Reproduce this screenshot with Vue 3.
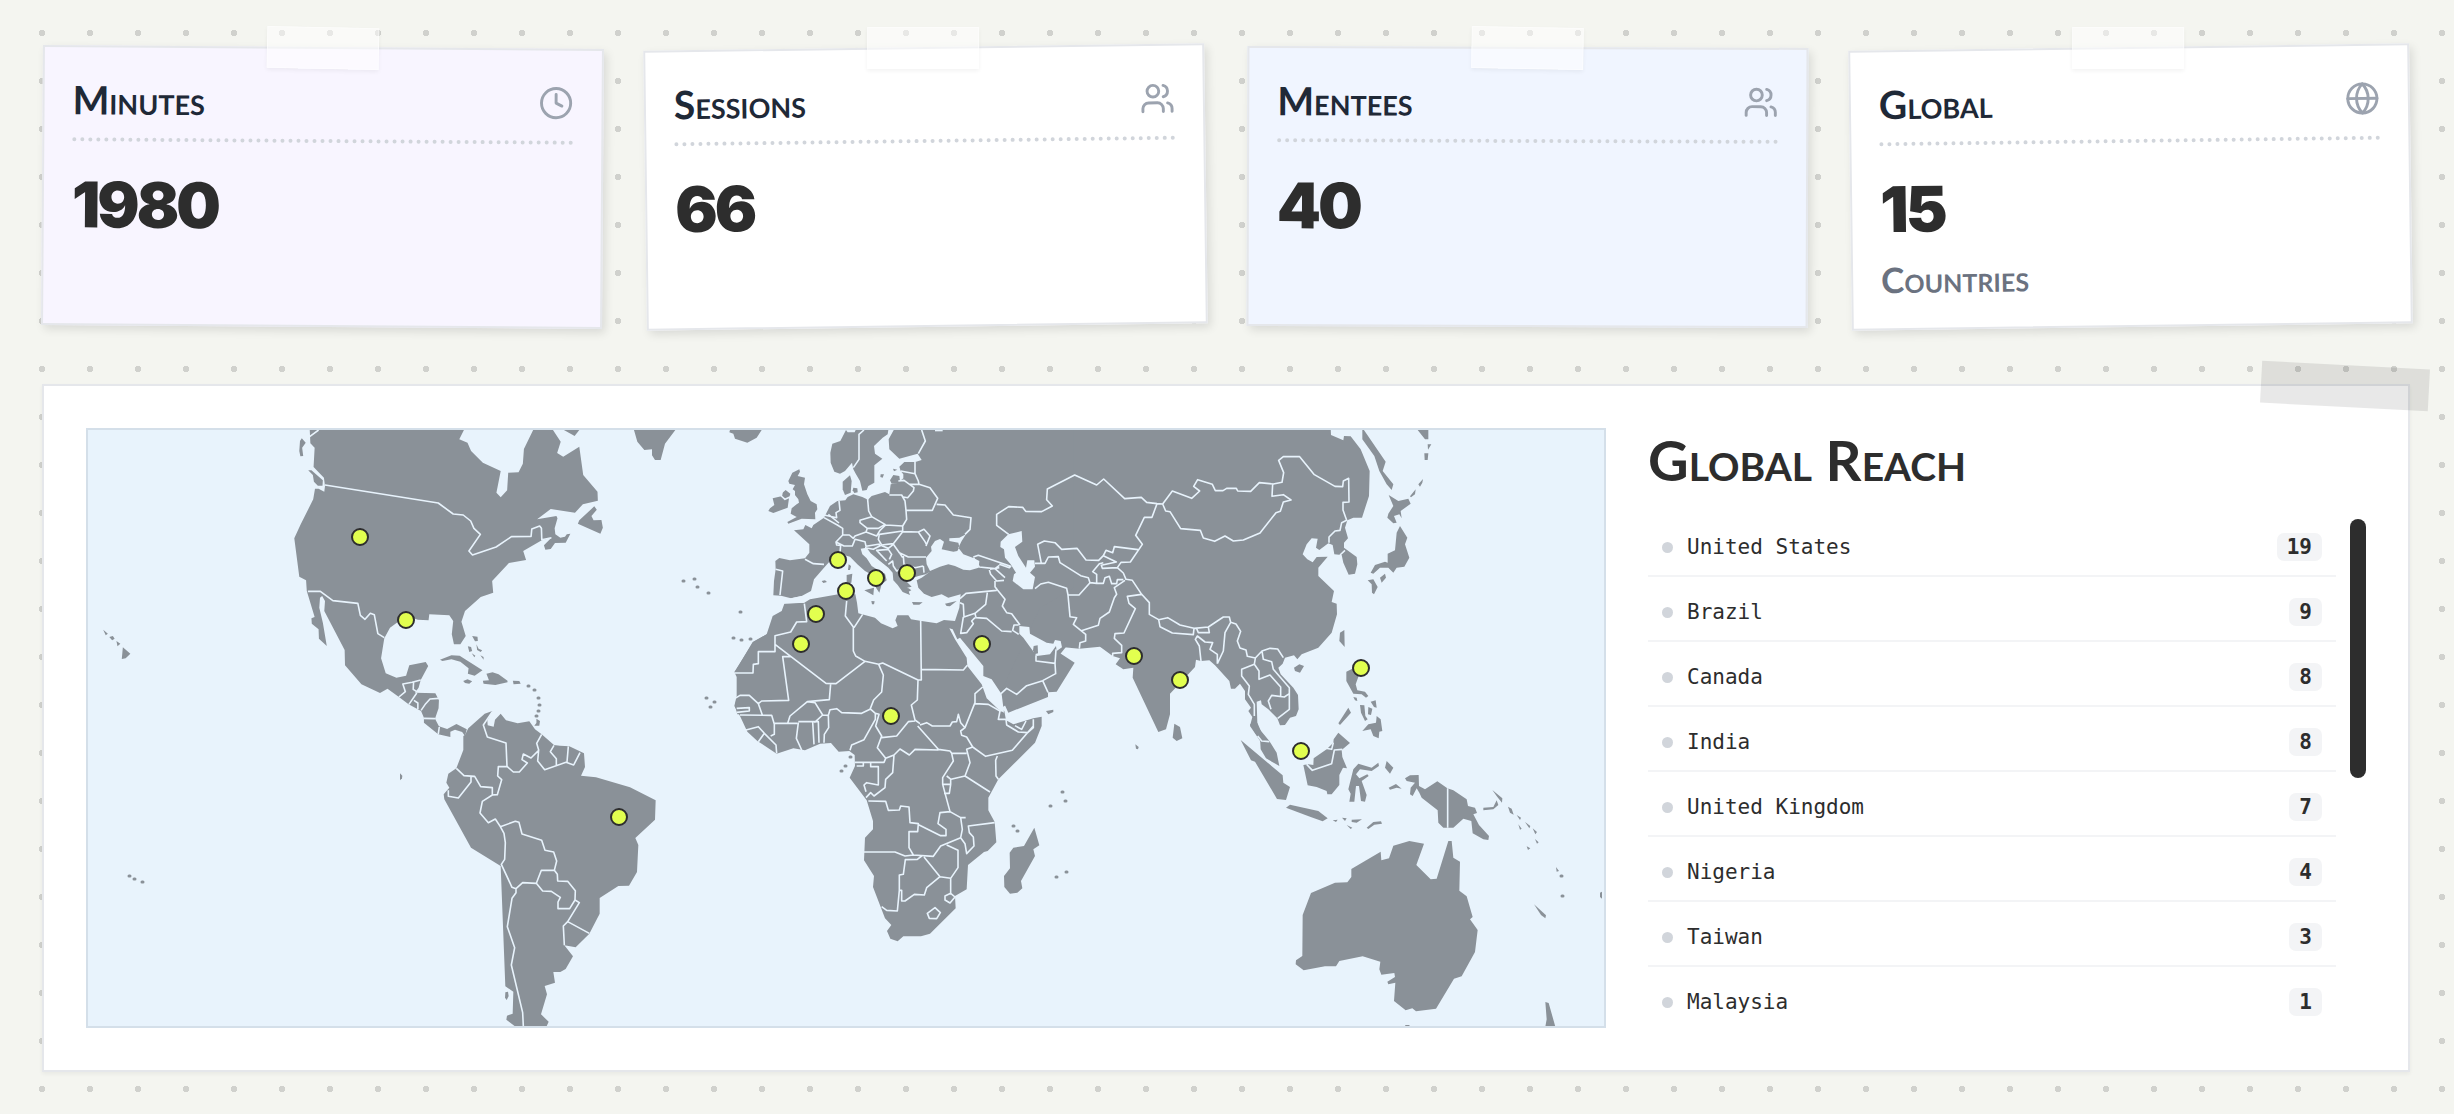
<script setup>
const cards = [
  { title: 'Minutes', value: '1980', icon: 'clock', tone: 'lilac', tilt: 'tilt-right' },
  { title: 'Sessions', value: '66', icon: 'users', tone: 'plain', tilt: 'tilt-left' },
  { title: 'Mentees', value: '40', icon: 'users', tone: 'sky', tilt: 'tilt-slight' },
  { title: 'Global', value: '15', icon: 'globe', tone: 'plain', tilt: 'tilt-left', note: 'Countries' },
]

const countries = [
  { name: 'United States', count: 19 },
  { name: 'Brazil', count: 9 },
  { name: 'Canada', count: 8 },
  { name: 'India', count: 8 },
  { name: 'United Kingdom', count: 7 },
  { name: 'Nigeria', count: 4 },
  { name: 'Taiwan', count: 3 },
  { name: 'Malaysia', count: 1 },
]

const pins = [
  [360, 536], [406, 619], [619, 816], [838, 559], [876, 577],
  [907, 572], [846, 590], [816, 613], [801, 643], [982, 643],
  [891, 715], [1134, 655], [1180, 679], [1361, 667], [1301, 750],
]

// Each region of the map is drawn on its own grid and placed with a transform.
const regions = [
  {
    id: 'north-america',
    place: 'translate(80 420) scale(0.357143 0.333333)',
    land: [
      'M643,20 1075,20 1075,27 1062,55 1085,65 1095,90 1128,125 1178,150 1166,215 1178,229 1196,208 1199,155 1228,154 1240,128 1243,84 1272,20 1320,20 1346,62 1336,96 1353,107 1398,77 1409,162 1449,212 1450,239 1408,250 1386,275 1318,264 1280,295 1334,285 1337,292 1329,322 1331,340 1345,350 1358,347 1363,340 1373,338 1360,365 1330,366 1318,384 1303,386 1299,373 1320,350 1293,358 1241,390 1249,417 1201,426 1154,480 1157,515 1122,528 1078,570 1068,602 1080,645 1065,670 1047,670 1041,640 1045,600 1034,583 978,580 976,598 946,596 930,590 890,603 868,620 852,652 843,712 856,757 886,770 913,764 922,733 968,723 975,735 954,777 948,800 938,815 995,817 1005,838 1004,862 994,893 1005,916 1028,924 1054,909 1083,925 1078,945 1070,933 1050,926 1037,932 1037,948 1003,940 963,905 963,890 955,870 920,850 893,828 861,803 840,816 788,790 742,733 741,687 684,570 686,540 678,525 672,530 670,560 680,605 691,675 669,653 668,625 649,608 648,592 657,588 635,510 633,478 614,467 600,352 618,310 653,235 658,203 668,203 684,212 686,195 683,170 654,138 657,80 645,67Z',
      'M639,148 648,148 680,178 679,194 666,194 655,182 652,162Z',
      'M621,52 632,65 622,80 625,105 617,106 614,90 616,60Z',
      'M1355,27 1398,27 1385,45Z',
      'M1440,256 1447,266 1432,285 1438,298 1460,297 1464,320 1457,338 1394,308 1398,298Z',
      'M1008,716 1040,703 1063,704 1127,748 1105,764 1086,758 1088,742 1065,722 1040,715 1015,720Z',
      'M1138,758 1155,754 1172,760 1197,779 1197,784 1163,792 1130,788 1128,779 1145,778Z',
      'M1073,780 1085,775 1098,781 1090,788 1078,786Z',
      'M1212,779 1230,780 1234,788 1214,790Z',
      'M120,679 141,698 128,712 117,714Z M65,626 78,638 72,643Z M82,648 92,645 97,653 90,658Z M102,660 113,668 105,676Z',
      'M1098,645 1113,647 1114,660 1106,661Z M1086,676 1095,678 1098,690 1090,693Z M1110,670 1116,683 1126,688 1122,693 1112,687Z M1097,697 1107,704 1104,709Z M1121,703 1130,708 1130,716Z',
      'M1278,893 1288,900 1286,914 1272,914 1278,906Z',
    ],
    borders: 'M668,27 643,47M686,192 1003,246 1045,279 1073,282 1094,300 1103,322 1121,340 1089,390 1099,402 1165,378 1208,347 1263,346 1265,324 1287,315 1292,322 1293,356 1320,350M638,511 673,511 708,539 778,547 785,583 798,595 813,577 824,581 834,638 852,650M893,828 911,812 904,789 930,784 954,777M934,784 933,805 943,812M943,816 921,850M935,838 946,846 946,864M955,868 968,848 980,834 1005,832M963,892 994,893M1003,940 1006,918',
  },
  {
    id: 'south-america',
    place: 'translate(400 680) scale(0.333333)',
    land: [
      'M190,165 190,207 169,262 145,278 139,305 148,320 131,340 133,355 213,500 302,555 316,916 340,932 338,998 321,1004 319,1016 345,1036 438,1040 446,1022 423,1000 441,940 434,915 465,905 460,873 481,873 497,864 519,826 493,793 527,799 568,758 599,698 599,651 655,615 687,614 711,573 715,492 706,471 765,416 767,358 690,319 588,289 543,284 555,258 552,217 508,196 480,194 462,192 425,160 405,145 388,121 353,127 318,118 302,98 285,116 281,137 263,133 262,118 277,90 254,98 205,142 195,162Z',
      'M316,934 324,932 326,945 320,957 315,950Z',
      'M0,277 7,284 6,292 0,298Z',
    ],
    borders: 'M277,92 250,132 262,168 318,186 321,256M169,262 192,284 224,286 242,317 277,320 277,342M213,288 213,303 175,351 145,346 145,328M425,160 410,187 416,207 413,240 434,266 498,244 521,252 540,215M462,193 451,212 469,233 469,252M505,196 501,243M416,208 393,231 370,219 366,236 382,246 358,273 340,273 321,256 295,257 293,285 305,296 292,341 277,342 247,361 240,396 265,425 286,414 301,437 346,421 357,424 366,459 425,478 435,508 461,513 470,540 463,568 424,568 409,607 428,630 454,631 481,649 474,663 474,683 509,683 525,657 526,629 503,601 473,600 472,580 463,568M301,437 312,457 316,485 314,535 304,550 336,619 348,623 368,605 409,607M348,623 348,635 336,652 322,737 344,800 334,852 368,995 370,1036M525,657 538,665 503,722 490,735 493,793M503,722 568,757',
  },
  {
    id: 'europe',
    place: 'translate(620 420) scale(0.333333)',
    land: [
      'M42,27 166,27 135,68 122,117 105,117 96,103 96,85 73,87 52,62Z',
      'M330,27 425,27 410,50 382,65 345,53 340,38 328,34Z',
      'M538,145 540,152 533,165 555,170 552,190 562,220 572,240 590,250 592,265 585,275 586,295 545,293 505,308 502,303 530,288 512,278 515,262 530,250 537,245 535,235 525,222 525,210 518,205 525,192 508,188 505,180 517,155Z',
      'M484,218 497,207 511,218 507,232 503,260 460,276 445,270 450,262 463,252 458,232 484,226Z',
      'M678,27 683,34 704,34 707,27 805,27 803,40 788,50 762,75 765,98 787,113 763,133 763,185 745,195 740,207 727,209 720,180 708,160 700,145 696,125 675,150 660,158 643,152 632,125 631,95 637,68 661,60Z',
      'M690,163 695,180 692,215 675,222 668,205 668,182Z',
      'M700,200 712,202 713,214 703,216 698,208Z',
      'M782,160 792,160 788,170 781,168Z M819,143 832,146 822,151Z',
      'M825,20 806,55 808,85 838,113 893,98 905,117 886,123 853,123 838,137 842,150 850,160 850,172 840,180 838,165 820,162 810,178 815,188 833,186 812,190 808,220 795,213 755,225 744,236 727,228 700,220 683,228 676,238 652,240 630,255 612,290 580,312 575,322 556,312 550,325 522,328 568,370 568,395 555,412 510,418 478,411 466,420 467,445 462,480 460,523 483,524 513,532 545,525 553,545 493,548 485,570 458,585 440,640 398,663 345,752 352,765 352,820 345,855 352,880 1130,880 1145,860 1240,800 1400,600 1400,20Z',
    ],
    water: [
      'M475,536 513,532 545,525 573,510 582,475 612,440 630,420 650,396 690,407 712,430 735,450 762,465 768,500 778,515 785,490 800,478 795,458 775,448 755,435 740,412 727,400 722,383 740,380 752,397 780,420 805,440 818,455 820,478 833,492 848,513 870,522 862,500 875,497 858,480 880,470 895,465 917,460 930,452 905,470 890,478 895,500 912,518 935,528 965,520 985,530 1022,520 1018,560 1005,600 972,597 950,607 905,600 873,595 865,583 832,583 826,598 833,615 818,622 783,607 765,590 715,577 711,545 706,520 655,520 570,535 553,545 500,547 475,548Z',
      'M918,410 935,390 933,377 945,360 960,354 972,362 965,385 1000,392 1012,390 1018,378 1015,365 988,360 988,352 1018,350 1038,340 1025,360 1015,380 1030,400 1062,412 1078,420 1076,440 1050,448 1030,446 1005,435 985,430 960,437 930,450 920,430Z',
      'M945,20 968,20 968,31 945,31Z',
    ],
    isles: [
      'M733,508 762,500 760,523Z M680,462 697,458 694,485 680,488Z M686,430 693,435 690,447 684,447Z',
      'M876,543 908,544 898,551 880,551Z M975,548 1010,540 990,556 980,555Z M605,480 615,478 621,483 610,486Z M754,540 764,541 762,550 756,550Z',
      'M848,500 866,502 874,508 860,515Z',
    ],
    borders: 'M467,445 488,450 480,522M555,415 580,428 612,430M612,290 652,312 668,322 668,342 648,363 650,372 662,373 660,395M612,282 650,290 648,275 660,268 657,240M625,280 657,306M742,225 746,270 755,287 720,298 720,305 742,322 738,333 705,345 700,352 688,342 668,342M648,363 672,375 697,375 705,355 735,362 738,376 775,370 780,370M755,287 795,310 775,322 742,322M738,333 770,345 780,328 797,312 848,315M808,222 845,222 855,240 858,268 860,295 848,315 848,332 820,368 785,372 775,355 778,340 848,330M858,268 937,268 953,232 930,200 897,190 895,180 885,158 885,123M842,150 885,158M835,180 852,178 882,200 880,210 863,230 850,228M897,190 870,190M950,250 975,252 1000,282 1053,290 1050,325 1035,340M848,332 895,333 912,325 930,345 918,375M895,333 915,362 920,372M820,370 838,395 865,408 918,408M850,405 852,430 885,440 910,435M838,395 848,410M852,440 830,450 820,435 818,420 805,430M808,415 815,400 805,385 770,388 800,420M735,380 760,385 785,372M785,374 805,382 820,370M910,435 912,455M905,27 916,60 895,98M732,27 717,40 717,115 700,140M486,213 484,225 495,235 510,228',
  },
  {
    id: 'africa',
    place: 'translate(720 600) scale(0.333333)',
    land: [
      'M140,100 100,123 43,213 50,228 50,285 43,315 60,345 82,392 112,420 170,458 220,442 255,448 300,428 333,426 356,452 388,450 404,462 405,495 389,530 440,598 459,660 459,685 435,710 432,778 462,825 459,858 495,952 514,972 501,990 511,1013 533,1021 550,1006 603,1006 630,998 707,922 705,885 740,865 744,792 792,753 803,750 829,724 824,663 805,628 805,590 835,535 945,425 965,375 965,347 940,352 880,370 858,358 853,330 802,290 790,258 742,193 740,163 700,100Z',
      'M943,680 958,733 940,745 945,765 903,840 907,862 892,875 870,878 853,858 852,825 870,802 869,755 880,740 912,735Z',
      'M978,330 1000,326 1000,333 985,340Z',
    ],
    borders: 'M253,8 260,62 230,63 212,93 165,104 165,152 115,152 115,188 100,190 99,216 43,216M165,130 318,247 348,248 435,181 407,165 400,150 400,78 376,45 380,0M402,80 428,40M212,167 188,167 206,298 125,300 115,308 88,283 60,283 45,292M332,248 328,296 262,302 210,345 203,367M115,308 127,342M50,322 88,320 88,330 50,334M60,342 155,343 163,370 163,400 152,405M163,367 232,367M75,388 115,377 133,397 115,422M133,397 168,432 170,457M235,365 229,412 245,447M235,362 278,362 282,430M278,362 295,362 297,425M262,302 285,305 308,342 325,343 326,380 313,400 312,425M308,342 283,365M325,343 330,326 350,323 365,335 425,337 450,325 461,297 485,273 490,222 476,190 435,181M450,323 466,337 466,355 432,416 395,432 390,448M466,337 477,340 467,375 485,405 472,440 497,472 492,484 405,484M476,190 488,186 594,237 592,297 574,312 585,357 600,368M594,237 604,237 602,58M604,205 730,207 742,193M485,410 530,405 565,362 585,360M593,375 655,445M600,372 620,365 637,375 690,375 697,363 710,362 715,340 722,365 735,380 765,305 765,278 788,258M765,308 805,310 840,330 850,328M735,380 722,390 725,403 740,408 758,438 797,466 877,448 940,375M840,330 835,355 858,355 860,372 895,393 923,395M885,374 905,385 918,360M940,355 940,380 923,395M832,465 827,478 828,525 835,535M758,438 740,445 750,485 735,525 810,573M655,445 690,450 695,457 740,457M497,472 522,462 540,444 568,462 585,445 655,447M522,462 518,515 497,535 495,560 462,585 452,575 438,590M410,495 430,495 430,486M452,486 452,497 475,497 475,552 440,545 432,552 438,572M445,600 497,601 505,628 538,627 542,615 567,618 570,665 595,668 593,692 567,692 567,740 580,762M593,670 662,704 678,704 678,685 654,668 660,635 690,632 668,550 668,530 700,480 695,457M680,525 693,535 735,525M670,550 692,550 692,535M692,550 688,577 672,577M690,632 722,650 737,650M722,650 727,685 722,710 662,735 640,766 580,762 555,765 525,753 432,753M722,710 735,728 740,758 762,735 760,708 748,695 745,675 824,665M680,732 714,748 714,800 692,832 660,827 612,768M692,832 692,877M660,827 620,860 613,882 583,880 555,900 545,900 545,868 538,868 532,930 500,928 485,917M538,868 538,822 550,820 556,776 592,775 605,765M622,937 645,920 661,935 650,953 628,952ZM675,885 692,877 705,888 690,906 675,897Z',
  },
  {
    id: 'asia',
    place: 'translate(940 420) scale(0.333333)',
    land: [
      'M400,20 1172,20 1173,42 1210,58 1212,45 1232,46 1262,85 1289,150 1287,225 1266,290 1240,290 1222,298 1215,320 1224,352 1212,365 1212,380 1250,408 1252,430 1245,458 1226,461 1210,425 1205,402 1183,400 1178,372 1165,367 1138,387 1128,380 1133,353 1115,352 1100,370 1088,400 1102,415 1118,424 1130,408 1163,407 1135,440 1135,465 1182,510 1175,543 1190,548 1191,580 1175,635 1135,680 1085,700 1072,715 1062,703 1035,710 1028,728 1015,740 1022,760 1060,800 1074,822 1076,865 1068,885 1050,890 1035,912 1020,913 1012,892 985,865 965,850 963,838 950,842 952,905 965,935 988,962 962,962 930,915 937,888 925,870 933,860 915,835 915,810 900,788 885,803 873,803 868,780 825,733 808,718 783,720 768,716 765,738 740,765 690,818 690,880 678,925 655,933 578,770 580,740 550,745 527,730 540,712 518,705 480,677 418,683 365,678 350,690 404,725 350,812 324,814 324,828 205,875 180,820 300,560 400,500Z',
      'M1213,627 1214,678 1198,660 1200,635Z M1062,740 1078,730 1092,735 1080,755 1065,750Z M703,908 720,918 727,952 710,960 698,950Z',
      'M1346,222 1375,240 1405,233 1412,248 1382,270 1385,292 1378,280 1362,285 1370,305 1360,307 1342,290 1345,278 1360,255Z',
      'M1380,315 1402,350 1395,370 1408,410 1393,437 1370,440 1360,455 1345,440 1320,440 1300,458 1292,455 1305,432 1335,422 1343,425 1343,398 1365,388 1370,335Z',
      'M1283,478 1300,475 1313,498 1302,520 1296,515 1295,490Z M1320,470 1335,458 1338,470 1325,485Z',
      'M1267,20 1337,122 1328,150 1360,190 1355,207 1340,190 1318,150 1303,105 1267,55Z M1433,27 1465,27 1465,55 1455,55Z',
      'M1463,70 1474,70 1464,86Z M1453,97 1465,97 1463,117 1454,117Z M1435,190 1449,174 1447,185 1440,197Z M1410,226 1427,205 1425,220 1413,229Z',
      'M586,970 596,978 594,985 588,983Z',
    ],
    water: [
      'M205,340 245,330 247,362 225,378 235,405 258,440 262,418 283,418 285,437 270,455 285,468 278,505 250,505 218,480 222,460 228,455 212,430 195,410 192,385 181,378 182,362Z',
      'M238,615 268,618 270,638 320,665 340,668 345,657 362,660 366,679 350,690 348,675 330,700 290,705 268,675 250,650 238,638Z',
      'M28,622 38,625 52,655 60,650 130,735 130,765 155,775 185,820 192,875 175,865 140,832 125,790 82,735 80,710 45,655Z',
    ],
    isles: ['M281,675 293,673 294,697 283,700 279,688Z'],
    borders: 'M206,340 170,313 170,280 206,257 248,259 257,271 305,272 337,255 320,236 322,204 404,162 470,192 491,174 554,233 604,229 620,244 651,248 668,249 697,210 755,232 779,210 761,196 773,176 817,190 826,209 849,209 860,202 889,202 893,210 932,211 958,185 1000,189 1026,184 1031,155 1016,118 1030,107 1079,107 1123,161 1185,196 1208,197 1210,180 1226,172 1227,243 1209,244 1209,267 1220,298 1205,305 1200,328 1185,330 1167,348 1167,365M998,189 996,226 1030,221 1053,237 1030,243 1021,271 1008,275 960,336 910,357 880,360 855,345 824,361 790,351 781,328 722,323 690,272 677,270 668,249M651,248 636,289 613,289 587,343 607,370 571,423 543,424 532,440 550,456 558,475 577,478 605,520 628,545 628,580 656,596 683,590 720,612 762,622 805,618 850,588 868,588 872,604 888,609 902,631 892,660 900,681 918,687 922,706 946,711 966,690 990,682 1013,684 1030,710M304,427 293,370 313,360 345,365 365,385 411,382 438,417 476,418 490,404M594,386 523,377 518,395 498,388 490,404 529,423 484,433 487,442 532,440M285,427 315,427 325,408 355,407 360,425 422,464 445,470 450,485 470,487 470,460 458,452 478,428 490,425M450,485 417,522 384,522 380,502 325,484 302,489 285,503M384,522 390,587 410,590 400,610 437,640 437,660 420,665 418,683M424,629 475,613 480,592 508,573 523,530 530,520 523,500 555,478M470,487 490,487 495,470 508,466 515,488 530,488 532,476 550,476M605,520 562,526 567,547 586,563 552,636 525,638 523,652 545,673 545,695 518,697 518,705M656,596 660,617 697,636 760,641 762,622M770,623 775,635 808,635 805,618M783,720 778,675 766,655 772,645 795,663 818,665 810,685 832,700 832,728M872,604 855,635 850,690 832,728M946,711 943,730 905,745 905,765 928,795 925,820 943,850 943,885M943,730 957,750 957,775 990,762 1022,798 1022,825M966,690 970,715 995,722 1000,745 1048,800 1048,865 1013,892M993,865 985,840 995,823 1033,828 1048,818M1200,402 1215,388M100,408 115,403 212,436 208,440 178,430M100,410 118,438 165,443 178,433M165,443 195,470M150,445 178,440M148,447 152,460 170,480 192,478M165,480 165,497 173,508 195,535 187,555 200,575 215,578 240,612M60,533 78,517 170,508M142,515 137,550 105,577 72,588 70,550 60,545M105,577 108,590 140,592 185,630 215,632M105,590 95,600 100,608 80,635 62,637 70,588M236,612 222,612 218,628 236,640M288,703 288,720 345,727 348,685M345,727 347,758 308,779 260,794 230,820 200,802 183,818M308,779 324,814',
  },
  {
    id: 'oceania',
    place: 'translate(1160 640) scale(0.333333)',
    land: [
      'M270,250 290,240 295,260 328,300 350,335 358,375 318,352 302,325 300,290 288,280Z',
      'M242,297 368,403 370,425 390,438 378,477 351,474 285,362 273,358Z',
      'M378,500 390,491 475,510 503,532 488,541 450,527Z',
      'M430,372 445,370 460,372 461,352 500,325 520,305 521,295 535,275 570,306 545,327 547,348 561,382 549,380 538,402 538,432 515,460 502,460 500,450 470,438 443,433Z',
      'M580,385 595,368 635,380 655,365 657,375 635,390 600,385 588,400 598,412 622,400 626,405 605,420 620,462 615,482 603,480 597,435 588,435 583,482 568,482 572,458 565,445Z',
      'M680,360 700,380 690,398 675,380Z M686,440 708,429 725,443 710,440 690,446Z',
      'M735,412 750,403 776,402 777,435 795,445 832,421 862,442 880,448 920,475 924,495 945,500 951,516 940,520 957,552 987,585 985,597 970,595 938,577 934,540 910,533 880,560 850,560 835,545 833,508 785,470 778,455 770,442 758,465 750,460 752,440 765,425 740,420Z',
      'M453,756 525,725 562,724 574,708 574,684 662,632 664,658 687,652 700,614 748,600 792,608 769,672 812,715 830,713 865,600 875,600 880,650 900,662 898,749 920,766 938,828 930,835 953,867 945,933 905,1006 882,1013 828,1103 768,1111 757,1102 737,1108 702,1080 706,1025 685,1030 682,1022 705,1008 703,996 664,1001 658,985 661,962 608,946 538,960 528,976 495,976 431,988 407,970 408,958 427,945 428,822Z',
      'M1156,1083 1166,1086 1186,1157 1156,1157 1160,1135Z M735,1152 750,1152 745,1157 738,1157Z',
      'M1122,790 1158,823 1156,832 1143,822Z',
      'M970,500 1000,498 1010,478 1015,492 1000,505 970,508Z M997,447 1027,472 1026,485 1012,468Z M1044,497 1055,503 1061,521 1050,515Z M1070,522 1083,530 1080,537Z M1095,543 1111,555 1108,562Z M1075,550 1085,563 1080,566Z M1118,562 1131,573 1126,580Z M1125,594 1136,604 1131,608Z M1100,616 1111,622 1104,627Z M1188,678 1197,690 1190,692Z M1320,755 1326,752 1326,773 1320,768Z',
      'M518,538 533,536 528,543Z M546,530 560,532 555,540Z M575,536 606,535 590,545 575,543Z M560,552 577,560 572,564Z M620,560 640,543 663,541 666,548 643,551 625,564Z',
      'M559,92 580,82 596,105 587,130 592,148 615,152 625,165 618,170 605,160 580,158 559,120Z M535,247 565,200 573,215 540,252Z',
      'M580,168 590,170 592,180 585,178Z M600,192 613,193 616,225 623,235 615,240 603,215Z M625,198 637,203 633,222 624,220Z M632,182 647,178 650,200 642,198Z',
      'M607,270 625,250 648,245 650,225 662,235 667,270 658,272 656,292 640,285 632,265Z',
    ],
    borders: 'M293,285 305,300 328,302M440,370 457,388 515,368 523,327 547,325M497,322 515,325 520,305M863,442 863,560',
  },
]

const islets = [
  [683, 580], [694, 578], [697, 586], [708, 592], [740, 611], [733, 637], [741, 639], [750, 638],
  [706, 697], [714, 701], [710, 706], [528, 685], [534, 689], [538, 697], [539, 704], [538, 710],
  [536, 715], [845, 765], [841, 770], [850, 756], [1062, 791], [1065, 800], [1050, 805], [1013, 825],
  [1017, 830], [1056, 876], [1066, 871], [129, 875], [134, 878], [142, 881], [1561, 875], [1562, 895],
]
const isletPath = islets.map(([x, y]) => `M${x} ${y}h1`).join('')
</script>

<template>
  <main class="board">
    <section class="stats" aria-label="Totals">
      <article v-for="card in cards" :key="card.title" class="card" :class="[card.tone, card.tilt]">
        <span class="tape" aria-hidden="true"></span>
        <header class="card-head">
          <h2>{{ card.title }}</h2>
          <svg class="icon" viewBox="0 0 24 24" aria-hidden="true">
            <template v-if="card.icon === 'clock'">
              <circle cx="12" cy="12" r="10" />
              <path d="M12 6v6l4 2" />
            </template>
            <template v-else-if="card.icon === 'users'">
              <path d="M16 21v-2a4 4 0 0 0-4-4H6a4 4 0 0 0-4 4v2" />
              <circle cx="9" cy="7" r="4" />
              <path d="M22 21v-2a4 4 0 0 0-3-3.87" />
              <path d="M16 3.13a4 4 0 0 1 0 7.75" />
            </template>
            <template v-else>
              <circle cx="12" cy="12" r="10" />
              <path d="M12 2a14.5 14.5 0 0 0 0 20 14.5 14.5 0 0 0 0-20" />
              <path d="M2 12h20" />
            </template>
          </svg>
        </header>
        <p class="value">{{ card.value }}</p>
        <p v-if="card.note" class="note">{{ card.note }}</p>
      </article>
    </section>

    <section class="panel">
      <span class="panel-tape" aria-hidden="true"></span>
      <svg class="map" viewBox="88 429 1516 596" role="img" aria-label="World map of sessions">
        <g v-for="region in regions" :key="region.id" :transform="region.place">
          <path v-for="d in region.land" :key="d" class="land" :d="d" />
          <path class="border" :d="region.borders" />
        </g>
        <g v-for="region in regions" :key="region.id + '-sea'" :transform="region.place">
          <path v-for="d in region.water" :key="d" class="water" :d="d" />
          <path v-for="d in region.isles" :key="d" class="land" :d="d" />
        </g>
        <path class="islets" :d="isletPath" />
        <circle v-for="[x, y] in pins" :key="x" class="pin" :cx="x" :cy="y" r="8" />
      </svg>

      <div class="reach">
        <h1>Global Reach</h1>
        <div class="scroller">
          <ul>
            <li v-for="country in countries" :key="country.name">
              <span class="bullet" aria-hidden="true"></span>
              <span class="name">{{ country.name }}</span>
              <span class="count">{{ country.count }}</span>
            </li>
          </ul>
          <span class="thumb" aria-hidden="true"></span>
        </div>
      </div>
    </section>
  </main>
</template>

<style>
body {
  background-color: #f4f5f0;
  background-image: radial-gradient(circle at center, #d0d1cd 3px, transparent 3px);
  background-position: 18px 9px;
  background-size: 48px 48px;
}
</style>

<style scoped>
.board {
  box-sizing: border-box;
  padding: 47px 44px 43px 42px;
  color: #2d2d2d;
  overflow: hidden;
}

h1,
h2,
p,
ul {
  margin: 0;
  padding: 0;
}

.stats {
  display: grid;
  grid-template-columns: repeat(4, minmax(0, 1fr));
  gap: 42px;
}

.card {
  position: relative;
  box-sizing: border-box;
  min-height: 280px;
  padding: 28px;
  border: 2px solid #e5e7eb;
  background: #fff;
  box-shadow: 3px 4px 10px rgba(0, 0, 0, 0.11);
}

.lilac { background: #f8f5ff; }
.sky { background: #f0f5ff; }
.tilt-right { transform: rotate(0.4deg); }
.tilt-slight { transform: rotate(0.2deg); }
.tilt-left { transform: rotate(-0.75deg); }

.tape {
  position: absolute;
  top: -22px;
  left: 50%;
  box-sizing: border-box;
  width: 112px;
  height: 42px;
  margin-left: -56px;
  border: 1px solid rgba(255, 255, 255, 0.5);
  background: rgba(255, 255, 255, 0.5);
  box-shadow: 0 2px 4px rgba(0, 0, 0, 0.05);
  transform: rotate(0.75deg);
}

.card-head {
  display: flex;
  align-items: center;
  justify-content: space-between;
  padding-bottom: 14px;
  border-bottom: 4px dotted #d1d5db;
}

h1,
h2,
.note {
  font-family: Lato, "Liberation Sans", sans-serif;
  font-weight: 700;
  font-variant-caps: small-caps;
}

h2 {
  color: #1f2937;
  font-size: 39px;
  line-height: 48px;
}

.icon {
  width: 35px;
  height: 35px;
  fill: none;
  stroke: #9ca3af;
  stroke-width: 2;
  stroke-linecap: round;
  stroke-linejoin: round;
}

.value {
  margin-top: 32px;
  font-family: Inter, "Liberation Sans", sans-serif;
  font-size: 63px;
  font-weight: 900;
  line-height: 63px;
  letter-spacing: -0.05em;
}

.note {
  margin-top: 18px;
  color: #6b7280;
  font-size: 35px;
  line-height: 40px;
}

.panel {
  position: relative;
  display: grid;
  grid-template-columns: 760fr 359fr;
  align-items: start;
  gap: 42px;
  margin-top: 57px;
  padding: 42px;
  border: 2px solid #e5e7eb;
  background: #fff;
  box-shadow: 0 2px 4px rgba(0, 0, 0, 0.05);
}

.panel-tape {
  position: absolute;
  top: -21px;
  right: -21px;
  width: 168px;
  height: 42px;
  background: rgba(0, 0, 0, 0.09);
  transform: rotate(3deg);
}

.map {
  display: block;
  box-sizing: border-box;
  width: 100%;
  border: 2px solid #d4dfe9;
  background: #e8f3fc;
}

.land { fill: #8a9198; }
.water { fill: #e8f3fc; }

.border {
  fill: none;
  stroke: #e8f3fc;
  stroke-width: 1.6px;
  stroke-linejoin: round;
  vector-effect: non-scaling-stroke;
}

.islets {
  fill: none;
  stroke: #8a9198;
  stroke-width: 3px;
  stroke-linecap: round;
}

.pin {
  fill: #e2ff4f;
  stroke: #2d2d2d;
  stroke-width: 2px;
}

h1 {
  margin-bottom: 28px;
  font-size: 56px;
  line-height: 63px;
}

.scroller {
  display: flex;
  align-items: flex-start;
  gap: 14px;
  max-height: 509px;
  overflow: hidden;
}

ul {
  display: flex;
  flex: 1;
  flex-direction: column;
  gap: 7px;
  list-style: none;
}

li {
  display: flex;
  align-items: center;
  gap: 14px;
  padding: 14px;
  border-bottom: 2px solid #f3f4f6;
  font-family: "DejaVu Sans Mono", "Liberation Mono", monospace;
  font-size: 21px;
  line-height: 28px;
}

.bullet {
  width: 11px;
  height: 11px;
  border-radius: 50%;
  background: #d1d5db;
}

.name { flex: 1; }

.count {
  padding: 0 10px;
  border-radius: 7px;
  background: #f3f4f6;
  font-weight: 700;
}

.thumb {
  width: 16px;
  height: 259px;
  border-radius: 8px;
  background: #2d2d2d;
}
</style>
